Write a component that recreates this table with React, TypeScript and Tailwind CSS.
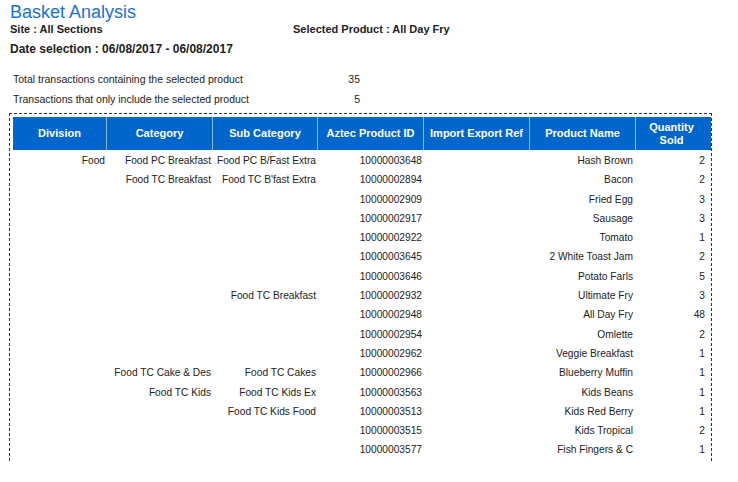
const rows = [
  { div: "Food", cat: "Food PC Breakfast", sub: "Food PC B/Fast Extra", id: "10000003648", name: "Hash Brown", qty: "2" },
  { div: "", cat: "Food TC Breakfast", sub: "Food TC B'fast Extra", id: "10000002894", name: "Bacon", qty: "2" },
  { div: "", cat: "", sub: "", id: "10000002909", name: "Fried Egg", qty: "3" },
  { div: "", cat: "", sub: "", id: "10000002917", name: "Sausage", qty: "3" },
  { div: "", cat: "", sub: "", id: "10000002922", name: "Tomato", qty: "1" },
  { div: "", cat: "", sub: "", id: "10000003645", name: "2 White Toast Jam", qty: "2" },
  { div: "", cat: "", sub: "", id: "10000003646", name: "Potato Farls", qty: "5" },
  { div: "", cat: "", sub: "Food TC Breakfast", id: "10000002932", name: "Ultimate Fry", qty: "3" },
  { div: "", cat: "", sub: "", id: "10000002948", name: "All Day Fry", qty: "48" },
  { div: "", cat: "", sub: "", id: "10000002954", name: "Omlette", qty: "2" },
  { div: "", cat: "", sub: "", id: "10000002962", name: "Veggie Breakfast", qty: "1" },
  { div: "", cat: "Food TC Cake & Des", sub: "Food TC Cakes", id: "10000002966", name: "Blueberry Muffin", qty: "1" },
  { div: "", cat: "Food TC Kids", sub: "Food TC Kids Ex", id: "10000003563", name: "Kids Beans", qty: "1" },
  { div: "", cat: "", sub: "Food TC Kids Food", id: "10000003513", name: "Kids Red Berry", qty: "1" },
  { div: "", cat: "", sub: "", id: "10000003515", name: "Kids Tropical", qty: "2" },
  { div: "", cat: "", sub: "", id: "10000003577", name: "Fish Fingers & C", qty: "1" },
];

const cols = "grid grid-cols-[94px_106px_105px_106px_106px_106px_71px]";
const cell = "text-right pr-[2px] whitespace-nowrap overflow-hidden";

export default function App() {
  return (
    <div className="w-[738px] h-[482px] bg-white overflow-hidden text-[11px] text-[#222] font-['Liberation_Sans',Arial,sans-serif]">
      <div className="pl-[10px] pt-[2px]">
        <h1 className="text-[#1a72cf] text-[18px] leading-[20px]">Basket Analysis</h1>
        <div className="flex font-bold leading-[14px]">
          <span className="w-[283px]">Site : All Sections</span>
          <span>Selected Product : All Day Fry</span>
        </div>
        <div className="font-bold text-[12px] leading-[14px] mt-[6px]">Date selection : 06/08/2017 - 06/08/2017</div>
        <div className="pl-[3px] mt-[13px] leading-[20px] text-[10.5px]">
          <div className="flex">
            <span className="w-[335px] whitespace-nowrap">Total transactions containing the selected product</span>
            <span className="w-[12px] text-right">35</span>
          </div>
          <div className="flex">
            <span className="w-[335px] whitespace-nowrap">Transactions that only include the selected product</span>
            <span className="w-[12px] text-right">5</span>
          </div>
        </div>
      </div>
      <div className="ml-[9px] mt-[4px] w-[703px] h-[348px] border border-dashed border-[#2a2a80] border-b-0 pt-[3px] pl-[3px]">
        <div className={`${cols} bg-[#0066cc] text-white font-bold h-[33px]`}>
          {["Division", "Category", "Sub Category", "Aztec Product ID", "Import Export Ref", "Product Name", "Quantity Sold"].map((h, i) => (
            <div
              key={h}
              className={`flex items-center justify-center text-center leading-[13px] px-[4px] ${i < 6 ? "border-r border-[#8ab8e6]" : ""}`}
            >
              {h}
            </div>
          ))}
        </div>
        <div className="pt-[1px] text-[10.2px]">
          {rows.map((r) => (
            <div key={r.id} className={`${cols} h-[19.3px] leading-[19px]`}>
              <div className={cell}>{r.div}</div>
              <div className={cell}>{r.cat}</div>
              <div className={cell}>{r.sub}</div>
              <div className={cell}>{r.id}</div>
              <div></div>
              <div className={cell + " pr-[3px]"}>{r.name}</div>
              <div className={cell}>{r.qty}</div>
            </div>
          ))}
        </div>
      </div>
    </div>
  );
}
